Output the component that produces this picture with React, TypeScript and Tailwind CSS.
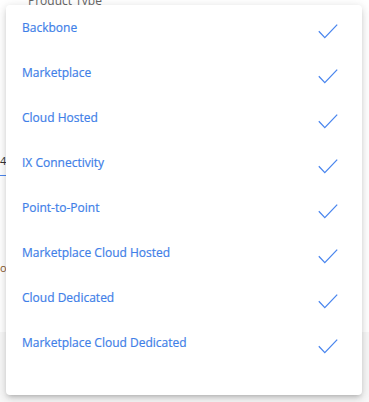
const options = [
  "Backbone",
  "Marketplace",
  "Cloud Hosted",
  "IX Connectivity",
  "Point-to-Point",
  "Marketplace Cloud Hosted",
  "Cloud Dedicated",
  "Marketplace Cloud Dedicated",
];

function Check() {
  return (
    <svg width="20" height="15" viewBox="0 0 20 15" fill="none" className="shrink-0">
      <path d="M0.8 7.3 L6.8 13.6 L19.2 0.6" stroke="#4a86ee" strokeWidth="1.3" />
    </svg>
  );
}

export default function App() {
  return (
    <div
      className="relative h-[402px] w-[369px] overflow-hidden bg-white"
      style={{ fontFamily: '"Open Sans", "Noto Sans", sans-serif' }}
    >
      {/* page behind the menu */}
      <div className="flex h-full flex-col">
        <div className="h-[332px] bg-white">
          <div className="-mt-[7px] pl-[28px] text-[12px] leading-4 text-[#666]">Product Type</div>
          <div className="mt-[146px] text-[11px] leading-3 text-[#333]">4</div>
          <div className="mt-[8px] h-px w-[8px] bg-[#4a86ee]" />
          <div className="mt-[86px] text-[11px] leading-3 text-[#8a5a2e]">o</div>
        </div>
        <div className="flex-1 bg-[#f7f7f7]" />
      </div>

      {/* dropdown menu */}
      <div className="absolute left-[6px] top-[5px] h-[390px] w-[356px] rounded bg-white pt-[15px] shadow-[0_3px_4px_-2px_rgba(0,0,0,0.18),0_4px_8px_0_rgba(0,0,0,0.1),0_1px_10px_1px_rgba(0,0,0,0.08)]">
        <ul>
          {options.map((o) => (
            <li key={o} className="flex h-[45px] items-start justify-between pl-[16px] pr-[24px]">
              <span className="text-[12px] leading-4 text-[#3f7fe8] [-webkit-text-stroke:0.2px_#3f7fe8]">{o}</span>
              <span className="mt-[4px]">
                <Check />
              </span>
            </li>
          ))}
        </ul>
      </div>
    </div>
  );
}
